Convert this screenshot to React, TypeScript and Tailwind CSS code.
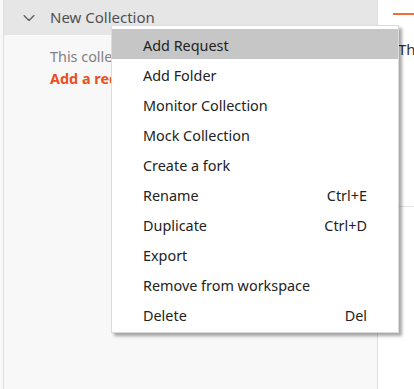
import { ChevronDown } from "lucide-react";

const items: { label: string; shortcut?: string; active?: boolean }[] = [
  { label: "Add Request", active: true },
  { label: "Add Folder" },
  { label: "Monitor Collection" },
  { label: "Mock Collection" },
  { label: "Create a fork" },
  { label: "Rename", shortcut: "Ctrl+E" },
  { label: "Duplicate", shortcut: "Ctrl+D" },
  { label: "Export" },
  { label: "Remove from workspace" },
  { label: "Delete", shortcut: "Del" },
];

export default function App() {
  return (
    <div
      className="relative flex h-[389px] w-[414px] overflow-hidden bg-white"
      style={{ fontFamily: '"Noto Sans", "Noto Sans CJK KR", sans-serif' }}
    >
      {/* Sidebar */}
      <div className="w-[3px] shrink-0 bg-[#f8f8f8]" />
      <div className="flex w-[375px] shrink-0 flex-col border-x border-[#dedede] bg-[#f8f8f8]">
        <div className="flex h-[35px] items-center bg-[#e6e6e6] pl-[15px]">
          <ChevronDown size={20} strokeWidth={1.3} className="text-[#555]" />
          <span className="ml-[11px] text-[15px] text-[#505050]">New Collection</span>
        </div>
        <div className="pl-[46px] pt-[11px]">
          <p className="text-[14.4px] leading-[22px] text-[#808080]">This collection is empty</p>
          <p className="text-[14.4px] font-bold leading-[22px] text-[#e8501e]">Add a request</p>
        </div>
      </div>

      {/* Right panel */}
      <div className="flex min-w-0 flex-1 flex-col">
        <div className="-mt-[15px] pl-[15px] text-[14px] leading-[20px] text-[#505050]">New</div>
        <div className="ml-[15px] mt-[8px] h-[2px] bg-[#f26b3a]" />
        <div className="mt-[23px] whitespace-nowrap pl-[20px] text-[15px] text-[#333]">This</div>
        <div className="mt-[145px] h-px bg-[#e6e6e6]" />
      </div>

      {/* Context menu */}
      <div className="absolute left-[111px] top-[25px] w-[288px] border border-[#dcdcdc] bg-white py-[3px] shadow-[3px_3px_3px_rgba(0,0,0,0.35)]">
        {items.map((it) => (
          <div
            key={it.label}
            className={`flex h-[30px] items-center justify-between pl-[31px] pr-[31px] pt-[3px] text-[14.4px] text-[#222] ${
              it.active ? "bg-[#c6c6c6]" : ""
            }`}
          >
            <span>{it.label}</span>
            {it.shortcut && <span>{it.shortcut}</span>}
          </div>
        ))}
      </div>
    </div>
  );
}
